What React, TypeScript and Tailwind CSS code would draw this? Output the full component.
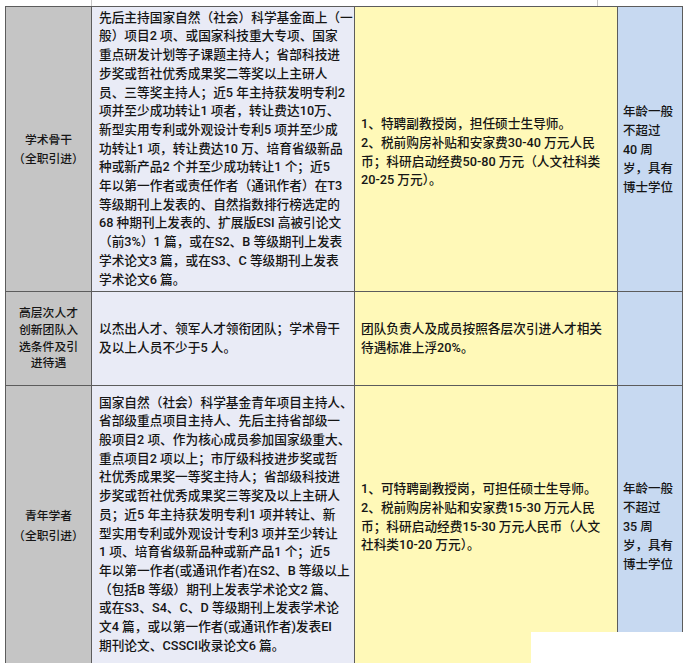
import React from "react";

const font = { fontFamily: 'Roboto, "Noto Sans CJK SC", sans-serif' };

const r1c2 = [
  "先后主持国家自然（社会）科学基金面上（一",
  "般）项目2 项、或国家科技重大专项、国家",
  "重点研发计划等子课题主持人；省部科技进",
  "步奖或哲社优秀成果奖二等奖以上主研人",
  "员、三等奖主持人；近5 年主持获发明专利2",
  "项并至少成功转让1 项者，转让费达10万、",
  "新型实用专利或外观设计专利5 项并至少成",
  "功转让1 项，转让费达10 万、培育省级新品",
  "种或新产品2 个并至少成功转让1 个；近5",
  "年以第一作者或责任作者（通讯作者）在T3",
  "等级期刊上发表的、自然指数排行榜选定的",
  "68 种期刊上发表的、扩展版ESI 高被引论文",
  "（前3%）1 篇，或在S2、B 等级期刊上发表",
  "学术论文3 篇，或在S3、C 等级期刊上发表",
  "学术论文6 篇。",
];

const r1c3 = [
  "1、特聘副教授岗，担任硕士生导师。",
  "2、税前购房补贴和安家费30-40 万元人民",
  "币；科研启动经费50-80 万元（人文社科类",
  "20-25 万元）。",
];

const r3c2 = [
  "国家自然（社会）科学基金青年项目主持人、",
  "省部级重点项目主持人、先后主持省部级一",
  "般项目2 项、作为核心成员参加国家级重大、",
  "重点项目2 项以上；市厅级科技进步奖或哲",
  "社优秀成果奖一等奖主持人；省部级科技进",
  "步奖或哲社优秀成果奖三等奖及以上主研人",
  "员；近5 年主持获发明专利1 项并转让、新",
  "型实用专利或外观设计专利3 项并至少转让",
  "1 项、培育省级新品种或新产品1 个；近5",
  "年以第一作者(或通讯作者)在S2、B 等级以上",
  "（包括B 等级）期刊上发表学术论文2 篇、",
  "或在S3、S4、C、D 等级期刊上发表学术论",
  "文4 篇，或以第一作者(或通讯作者)发表EI",
  "期刊论文、CSSCI收录论文6 篇。",
];

const r3c3 = [
  "1、可特聘副教授岗，可担任硕士生导师。",
  "2、税前购房补贴和安家费15-30 万元人民",
  "币；科研启动经费15-30 万元人民币（人文",
  "社科类10-20 万元）。",
];

function Lines({ lines }: { lines: string[] }) {
  return (
    <>
      {lines.map((l, i) => (
        <div key={i} className="whitespace-nowrap">
          {l}
        </div>
      ))}
    </>
  );
}

const c1 =
  "bg-[#c5c5c5] border-r border-b border-[#5c5c5c] flex flex-col items-center justify-center text-center text-[11.8px]";
const c2 =
  "bg-[#e9ebf6] border-r border-b border-[#5c5c5c] flex flex-col justify-center pl-[7px] text-[12.7px] leading-[18.7px]";
const c3 =
  "bg-[#fff9b8] border-r border-b border-[#5c5c5c] flex flex-col justify-center pl-[6px] text-[12.7px] leading-[18.7px]";
const c4 =
  "bg-[#c7d9f1] border-r border-b border-[#5c5c5c] flex flex-col justify-center pl-[5px] text-[12.5px] leading-[19px]";

export default function App() {
  return (
    <div
      className="relative w-[690px] h-[663px] overflow-hidden bg-white text-[#151515] font-medium"
      style={font}
    >
      <div className="h-[6px] ml-[91px] w-[507px] border-l border-r border-[#c8c8c8]" />
      <div className="ml-[5px] w-[678px] grid grid-cols-[86px_263px_263px_65px] grid-rows-[285px_94px_282px] border-t border-l border-[#5c5c5c]">
        {/* Row 1 */}
        <div className={c1 + " leading-[19px] pt-[1px]"}>
          <div>学术骨干</div>
          <div>（全职引进）</div>
        </div>
        <div className={c2}>
          <Lines lines={r1c2} />
        </div>
        <div className={c3 + " pt-[7px]"}>
          <Lines lines={r1c3} />
        </div>
        <div className={c4 + " pt-[1px]"}>
          <Lines lines={["年龄一般", "不超过", "40 周", "岁，具有", "博士学位"]} />
        </div>

        {/* Row 2 */}
        <div className={c1 + " leading-[16.8px]"}>
          <div>高层次人才</div>
          <div>创新团队入</div>
          <div>选条件及引</div>
          <div>进待遇</div>
        </div>
        <div className={c2}>
          <Lines lines={["以杰出人才、领军人才领衔团队；学术骨干", "及以上人员不少于5 人。"]} />
        </div>
        <div className={c3}>
          <Lines lines={["团队负责人及成员按照各层次引进人才相关", "待遇标准上浮20%。"]} />
        </div>
        <div className={c4} />

        {/* Row 3 */}
        <div className={c1 + " leading-[20px] pb-[2px]"}>
          <div>青年学者</div>
          <div>（全职引进）</div>
        </div>
        <div className={c2 + " pb-[4px]"}>
          <Lines lines={r3c2} />
        </div>
        <div className={c3 + " pb-[18px]"}>
          <Lines lines={r3c3} />
        </div>
        <div className={c4}>
          <Lines lines={["年龄一般", "不超过", "35 周", "岁，具有", "博士学位"]} />
        </div>
      </div>
      <div className="absolute left-[531px] top-[632px] w-[159px] h-[31px] bg-white" />
    </div>
  );
}
